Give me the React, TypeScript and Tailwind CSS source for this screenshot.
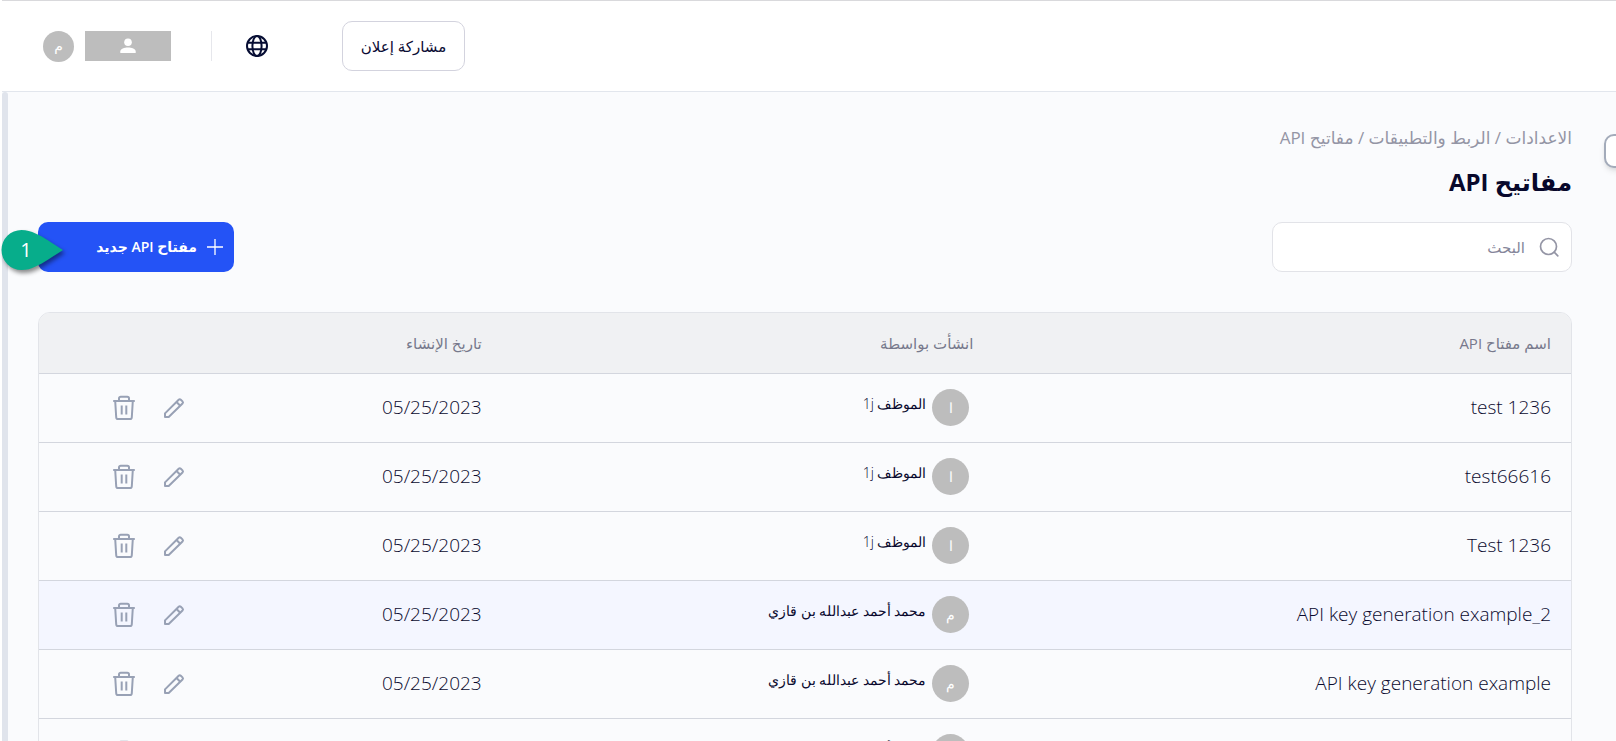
import React from "react";

type ApiKey = { name: string; owner: string; initial: string; date: string; active?: boolean };

const EMPLOYEE = "الموظف 1j";
const MOHAMMED = "محمد أحمد عبدالله بن قازي";

const KEYS: ApiKey[] = [
  { name: "test 1236", owner: EMPLOYEE, initial: "ا", date: "05/25/2023" },
  { name: "test66616", owner: EMPLOYEE, initial: "ا", date: "05/25/2023" },
  { name: "Test 1236", owner: EMPLOYEE, initial: "ا", date: "05/25/2023" },
  { name: "API key generation example_2", owner: MOHAMMED, initial: "م", date: "05/25/2023", active: true },
  { name: "API key generation example", owner: MOHAMMED, initial: "م", date: "05/25/2023" },
  { name: "API key generation", owner: MOHAMMED, initial: "م", date: "05/25/2023" },
];

function GlobeIcon() {
  return (
    <svg className="size-6" viewBox="0 0 24 24" fill="none" stroke="currentColor" strokeWidth="2" aria-hidden="true">
      <circle cx="12" cy="12" r="10" />
      <ellipse cx="12" cy="12" rx="4.6" ry="10" />
      <path d="M2.8 8.8h18.4M2.8 15.2h18.4" />
    </svg>
  );
}

function PersonIcon() {
  return (
    <svg className="h-4 w-4" viewBox="0 0 16 16" fill="currentColor" aria-hidden="true">
      <circle cx="8" cy="4.2" r="3.8" />
      <path d="M.3 15v-1.6C.3 10.9 4.5 9.5 8 9.5s7.7 1.4 7.7 3.9V15z" />
    </svg>
  );
}

function PencilIcon() {
  return (
    <svg className="size-6" viewBox="0 0 24 24" fill="none" stroke="currentColor" strokeWidth="2" strokeLinejoin="round" aria-hidden="true">
      <path d="M3 21V17.4L16.7 3.700a1.500 1.500 0 0 1 2.100 0l1.700 1.700a1.500 1.500 0 0 1 0 2.100L6.700 21z" />
      <path d="M14.500 6l3.700 3.700" />
    </svg>
  );
}

function TrashIcon() {
  return (
    <svg className="h-[26px] w-6" viewBox="0 0 24 26" fill="none" stroke="currentColor" strokeWidth="2" strokeLinejoin="round" aria-hidden="true">
      <path d="M1.200 6h21.600" />
      <path d="M7 6V3.500a1.700 1.700 0 0 1 1.700-1.700h6.600a1.700 1.700 0 0 1 1.700 1.700V6" />
      <path d="M3.200 6l1 16.200a2 2 0 0 0 2 1.900h11.600a2 2 0 0 0 2-1.900L20.800 6" />
      <path d="M9.700 10.500v9M14.300 10.500v9" />
    </svg>
  );
}

function StepMarker() {
  return (
    <div className="absolute -left-9 top-[7px] h-[46px] w-[66px]">
      <svg className="h-full w-full overflow-visible drop-shadow-[2px_3px_2px_rgba(0,0,0,0.45)]" viewBox="0 0 66 46" aria-hidden="true">
        <path d="M61 21C50 14 42 8 33.500 4.500Q27 1 19.500 1A20 20 0 0 0 19.500 41Q27 41 33.500 37.500C42 34 50 28 61 21z" fill="#07ad8b" />
      </svg>
      <span className="absolute left-0 top-0 w-12 text-center text-xl leading-[42px] text-white">1</span>
    </div>
  );
}

function Header() {
  return (
    <header className="flex h-[92px] shrink-0 items-center justify-end border-b border-t border-b-[#e2e6ed] border-t-[#d9d9dc] bg-white pl-[41px]">
      <button type="button" className="h-[50px] w-[123px] rounded-[10px] border border-[#d3d3de] bg-white text-[15px] text-[#0b0b33]">
        مشاركة إعلان
      </button>
      <button type="button" aria-label="اللغة" className="mr-[73px] text-[#060d33]">
        <GlobeIcon />
      </button>
      <div className="mr-[33px] h-[30px] w-px bg-[#e6e7ec]" />
      <button type="button" aria-label="الحساب" className="mr-10 flex h-[30px] w-[86px] items-center justify-center bg-[#bdbdbd] text-white">
        <PersonIcon />
      </button>
      <div className="mr-[11px] flex size-[31px] items-center justify-center rounded-full bg-[#bdbdbd] text-sm text-white">م</div>
    </header>
  );
}

function KeysTable() {
  return (
    <div className="mt-10 overflow-hidden rounded-t-xl border border-[#e2e4e9]">
      <table className="w-full table-fixed border-collapse text-right">
        <colgroup>
          <col className="w-[37.7%]" />
          <col className="w-[32.1%]" />
          <col className="w-[20.6%]" />
          <col />
        </colgroup>
        <thead className="bg-[#f0f1f3] text-[15px] text-[#77798c]">
          <tr className="h-[60px] border-b border-[#d3d6de]">
            <th className="px-5 font-normal">اسم مفتاح API</th>
            <th className="px-5 font-normal">انشأت بواسطة</th>
            <th className="px-5 font-normal">تاريخ الإنشاء</th>
            <th aria-label="إجراءات" />
          </tr>
        </thead>
        <tbody className="font-light text-[#0a0a2e]">
          {KEYS.map((k) => (
            <tr key={k.name} className={`h-[69px] border-b border-[#d3d6de] ${k.active ? "bg-[#f4f6ff]" : ""}`}>
              <td className="px-5 text-[19px]"><bdi>{k.name}</bdi></td>
              <td className="px-6">
                <div className="flex items-center gap-1.5">
                  <span className="flex size-[37px] shrink-0 items-center justify-center rounded-full bg-[#bdbdbd] text-sm text-white">{k.initial}</span>
                  <span className="pb-2 text-sm">{k.owner}</span>
                </div>
              </td>
              <td className="px-5 text-[19px]">{k.date}</td>
              <td>
                <div className="flex items-center gap-[26px] text-[#98a1b5]">
                  <button type="button" aria-label="تعديل"><PencilIcon /></button>
                  <button type="button" aria-label="حذف"><TrashIcon /></button>
                </div>
              </td>
            </tr>
          ))}
        </tbody>
      </table>
    </div>
  );
}

export default function App() {
  return (
    <div dir="rtl" className="relative flex h-screen flex-col overflow-hidden bg-white pl-0.5 font-['Open_Sans','Noto_Sans','DejaVu_Sans',sans-serif]">
      <Header />
      <div className="flex min-h-0 flex-1 bg-[#fafbfd]">
        <main className="min-w-0 flex-1 pl-[30px] pr-11 pt-8">
          <nav aria-label="مسار التنقل" className="text-[17px] leading-7 text-[#9495a5]">
            <a href="#settings">الاعدادات</a> / <a href="#apps">الربط والتطبيقات</a> / <a href="#keys">مفاتيح API</a>
          </nav>
          <h1 className="mt-3 text-2xl font-bold leading-9 text-[#08082b]">مفاتيح API</h1>
          <div className="mt-[22px] flex items-center justify-between">
            <label className="flex h-[50px] w-[300px] items-center gap-3.5 rounded-[10px] border border-[#e2e3e8] bg-white px-3 text-[#9495a5]">
              <svg className="size-5 shrink-0" viewBox="0 0 20 20" fill="none" stroke="currentColor" strokeWidth="1.7" strokeLinecap="round" aria-hidden="true">
                <circle cx="9.5" cy="9.5" r="8" />
                <path d="M15.2 15.2l3.600 3.600" />
              </svg>
              <input type="search" aria-label="البحث" placeholder="البحث" className="min-w-0 flex-1 bg-transparent text-[15px] outline-none placeholder:text-[#85869a]" />
            </label>
            <div className="relative">
              <button type="button" className="flex h-[50px] w-[196px] items-center gap-2.5 rounded-[10px] bg-[#2453f6] pr-[11px] text-sm font-semibold text-white">
                <svg className="size-4" viewBox="0 0 16 16" stroke="currentColor" strokeWidth="1.3" aria-hidden="true">
                  <path d="M8 0v16M0 8h16" />
                </svg>
                مفتاح API جديد
              </button>
              <StepMarker />
            </div>
          </div>
          <KeysTable />
        </main>
        <div className="w-1.5 shrink-0 rounded-t-sm bg-[#e0e4ec]" />
      </div>
      <button type="button" aria-label="القائمة" className="absolute -right-5 top-[134px] h-[34px] w-8 rounded-[10px] border-2 border-[#a3abba] bg-white shadow-md" />
    </div>
  );
}
